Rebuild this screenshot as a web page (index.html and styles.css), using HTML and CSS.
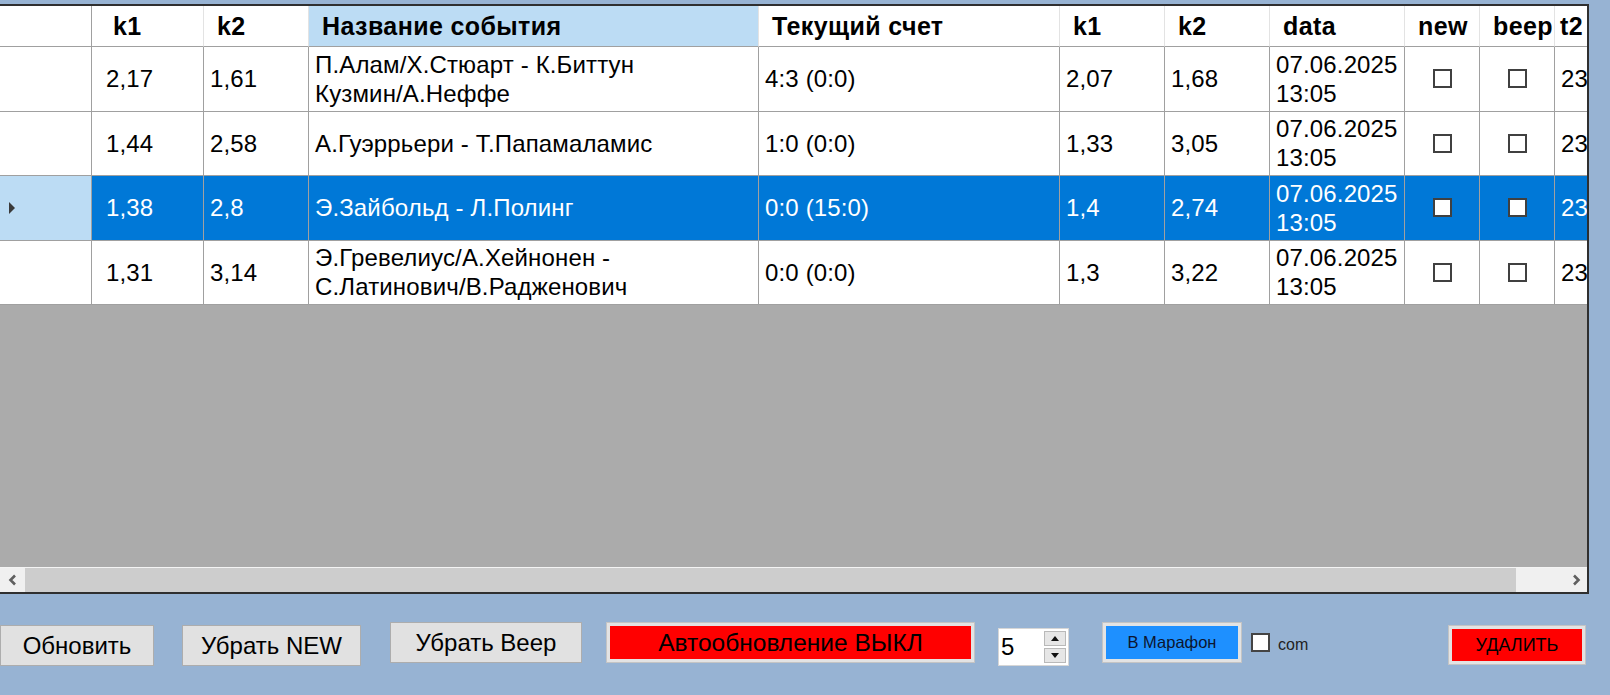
FILE: index.html
```html
<!DOCTYPE html>
<html lang="ru">
<head>
  <meta charset="UTF-8">
  <title>Live</title>
  <link rel="stylesheet" href="styles.css">
</head>
<body>
  <div class="grid">
    <div class="grid-body">
      <div class="row head">
        <div class="cell rh"></div>
        <div class="cell nar"></div>
        <div class="cell">k1</div>
        <div class="cell">k2</div>
        <div class="cell hl">Название события</div>
        <div class="cell">Текущий счет</div>
        <div class="cell">k1</div>
        <div class="cell">k2</div>
        <div class="cell">data</div>
        <div class="cell">new</div>
        <div class="cell">beep</div>
        <div class="cell last">t2</div>
      </div>

      <div class="row">
        <div class="cell rh"></div>
        <div class="cell nar"></div>
        <div class="cell">2,17</div>
        <div class="cell">1,61</div>
        <div class="cell">П.Алам/Х.Стюарт - К.Биттун<br>Кузмин/А.Неффе</div>
        <div class="cell">4:3 (0:0)</div>
        <div class="cell">2,07</div>
        <div class="cell">1,68</div>
        <div class="cell">07.06.2025 13:05</div>
        <div class="cell ctr"><span class="chk"></span></div>
        <div class="cell ctr"><span class="chk"></span></div>
        <div class="cell">23</div>
      </div>

      <div class="row">
        <div class="cell rh"></div>
        <div class="cell nar"></div>
        <div class="cell">1,44</div>
        <div class="cell">2,58</div>
        <div class="cell">А.Гуэррьери - Т.Папамаламис</div>
        <div class="cell">1:0 (0:0)</div>
        <div class="cell">1,33</div>
        <div class="cell">3,05</div>
        <div class="cell">07.06.2025 13:05</div>
        <div class="cell ctr"><span class="chk"></span></div>
        <div class="cell ctr"><span class="chk"></span></div>
        <div class="cell">23</div>
      </div>

      <div class="row sel">
        <div class="cell rh">
          <svg class="cur" width="8" height="14" viewBox="0 0 8 14"><polygon points="1,1 7,7 1,13" fill="#3a3a3a"/></svg>
        </div>
        <div class="cell nar"></div>
        <div class="cell">1,38</div>
        <div class="cell">2,8</div>
        <div class="cell">Э.Зайбольд - Л.Полинг</div>
        <div class="cell">0:0 (15:0)</div>
        <div class="cell">1,4</div>
        <div class="cell">2,74</div>
        <div class="cell">07.06.2025 13:05</div>
        <div class="cell ctr"><span class="chk"></span></div>
        <div class="cell ctr"><span class="chk"></span></div>
        <div class="cell">23</div>
      </div>

      <div class="row">
        <div class="cell rh"></div>
        <div class="cell nar"></div>
        <div class="cell">1,31</div>
        <div class="cell">3,14</div>
        <div class="cell">Э.Гревелиус/А.Хейнонен -<br>С.Латинович/В.Радженович</div>
        <div class="cell">0:0 (0:0)</div>
        <div class="cell">1,3</div>
        <div class="cell">3,22</div>
        <div class="cell">07.06.2025 13:05</div>
        <div class="cell ctr"><span class="chk"></span></div>
        <div class="cell ctr"><span class="chk"></span></div>
        <div class="cell">23</div>
      </div>
    </div>

    <div class="hscroll">
      <div class="sb-btn">
        <svg width="10" height="12" viewBox="0 0 10 12"><polyline points="7,1.5 2.5,6 7,10.5" fill="none" stroke="#5f5f5f" stroke-width="2.6"/></svg>
      </div>
      <div class="sb-thumb"></div>
      <div class="sb-rest">
        <svg width="10" height="12" viewBox="0 0 10 12"><polyline points="3,1.5 7.5,6 3,10.5" fill="none" stroke="#5f5f5f" stroke-width="2.6"/></svg>
      </div>
    </div>
  </div>

  <div class="controls">
    <button class="btn b-refresh">Обновить</button>
    <button class="btn b-new">Убрать NEW</button>
    <button class="btn b-beep">Убрать Beep</button>
    <button class="btn b-auto">Автообновление ВЫКЛ</button>
    <div class="spin">
      <span class="spin-val">5</span>
      <span class="spin-arrows">
        <span class="arr"><svg width="8" height="5" viewBox="0 0 8 5"><polygon points="0,5 4,0 8,5" fill="#111"/></svg></span>
        <span class="arr"><svg width="8" height="5" viewBox="0 0 8 5"><polygon points="0,0 8,0 4,5" fill="#111"/></svg></span>
      </span>
    </div>
    <button class="btn b-mara">В Марафон</button>
    <span class="cbox"></span>
    <span class="com">com</span>
    <button class="btn b-del">УДАЛИТЬ</button>
  </div>
</body>
</html>
```

FILE: styles.css
```css
body { margin: 0; width: 1610px; height: 695px; overflow: hidden; background: #97b3d3; font-family: "Liberation Sans", Arial, sans-serif; }

.grid { margin-top: 4px; width: 1589px; height: 590px; box-sizing: border-box; border: 2px solid #2f2f2f; border-left: none; background: #ababab; display: flex; flex-direction: column; overflow: hidden; }
.grid-body { flex: 1; overflow: hidden; }

.row { display: grid; grid-template-columns: 92px 8px 104px 105px 450px 301px 105px 105px 135px 75px 75px 100px; height: 64.5px; }
.row.head { height: 41px; }

.cell { box-sizing: border-box; display: flex; align-items: center; padding: 0 6px; background: #fff; color: #000; border-right: 1px solid #a0a0a0; border-bottom: 1px solid #a0a0a0; font-size: 24px; letter-spacing: 0.15px; line-height: 29px; overflow: hidden; }
.cell.ctr { justify-content: center; }
.cell.rh { padding: 0 0 0 8px; }

.head .cell { font-weight: bold; font-size: 25px; letter-spacing: 0.4px; padding-left: 13px; border-right-color: #e3e3e3; white-space: nowrap; }
.head .cell.rh, .head .cell.nar { border-right-color: #a0a0a0; }
.head .cell.hl { background: #bcdcf4; }
.head .cell.last { padding-left: 5px; }

.sel .cell { background: #0078d7; color: #fff; }
.sel .cell.rh { background: #bcdcf4; }

.chk { width: 19px; height: 19px; box-sizing: border-box; border: 2px solid #404040; background: #fff; }

.hscroll { flex: none; height: 25px; box-sizing: border-box; border-top: 1px solid #f4f4f4; background: #f0f0f0; display: flex; }
.sb-btn { width: 25px; display: flex; align-items: center; justify-content: center; }
.sb-thumb { width: 1491px; background: #cdcdcd; }
.sb-rest { flex: 1; display: flex; align-items: center; justify-content: flex-end; padding-right: 6px; }

.controls { display: flex; align-items: flex-start; margin-top: 28px; padding-right: 24px; }
.btn { box-sizing: border-box; height: 41px; margin: 0; padding: 0; border: 1px solid #adadad; background: #e1e1e1; color: #000; font-family: "Liberation Sans", Arial, sans-serif; font-size: 24px; display: flex; align-items: center; justify-content: center; }
.b-refresh { width: 154px; margin-top: 3px; }
.b-new { width: 179px; margin-left: 28px; margin-top: 3px; }
.b-beep { width: 192px; margin-left: 29px; }
.b-auto { width: 369px; margin-left: 24px; background: #ff0000; border-color: #c4c4c4; box-shadow: inset 0 0 0 3px #e3e3e3; font-size: 24.5px; }
.b-mara { width: 140px; margin-left: 33px; background: #1e90ff; border-color: #c4c4c4; box-shadow: inset 0 0 0 3px #e3e3e3; font-size: 16.5px; color: #0c1630; }
.b-del { width: 138px; height: 40px; margin-left: auto; margin-top: 3px; background: #ff0000; border-color: #c4c4c4; box-shadow: inset 0 0 0 3px #e3e3e3; font-size: 18px; }

.spin { width: 71px; height: 38px; margin-left: 23px; margin-top: 6px; box-sizing: border-box; border: 1px solid #d6d6d6; background: #fff; display: flex; }
.spin-val { flex: 1; font-size: 24px; line-height: 36px; padding-left: 2px; }
.spin-arrows { width: 22px; padding: 2px 2px 2px 0; display: flex; flex-direction: column; gap: 2px; }
.arr { flex: 1; box-sizing: border-box; border: 1px solid #b9b9b9; background: #e6e6e6; display: flex; align-items: center; justify-content: center; }

.cbox { width: 19px; height: 19px; margin-left: 9px; margin-top: 11px; box-sizing: border-box; border: 2px solid #444; background: #fff; }
.com { margin-left: 8px; margin-top: 12px; font-size: 16px; line-height: 22px; color: #222; }
```
